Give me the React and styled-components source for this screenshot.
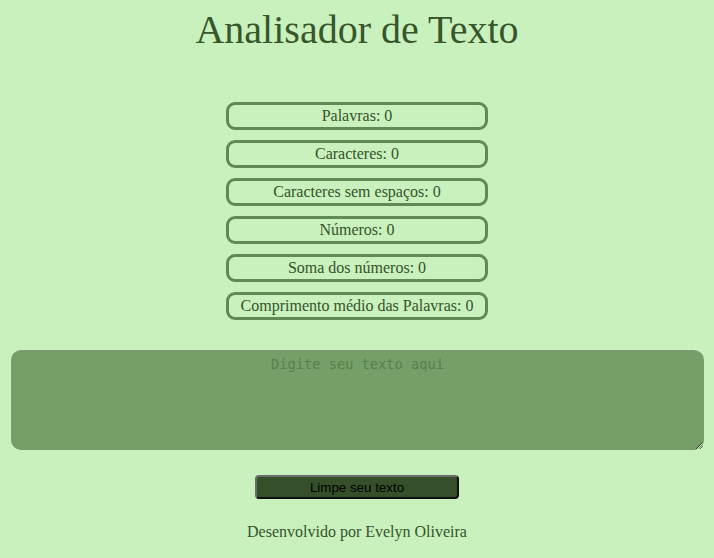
import React, { useState } from "react";
import styled, { createGlobalStyle } from "styled-components";

const Global = createGlobalStyle`
  html, body { margin: 0; padding: 0; background: #c9f1bd; }
  body { font-family: "Liberation Serif", "Times New Roman", serif; color: #35532b; }
`;

const Page = styled.main`
  display: flex;
  flex-direction: column;
  align-items: center;
  min-height: 558px;
`;

const Title = styled.h1`
  margin: 7px 0 0;
  font-size: 40px;
  font-weight: normal;
  line-height: 45px;
  color: #37562b;
`;

const Stats = styled.section`
  display: flex;
  flex-direction: column;
  gap: 10px;
  margin-top: 50px;
`;

const Stat = styled.div`
  box-sizing: border-box;
  width: 262px;
  height: 28px;
  border: 3px solid #5f8a55;
  border-radius: 9px;
  display: flex;
  align-items: center;
  justify-content: center;
  font-size: 16px;
  color: #35532b;
`;

const TextArea = styled.textarea`
  box-sizing: border-box;
  margin-top: 30px;
  width: 693px;
  height: 100px;
  align-self: flex-start;
  margin-left: 11px;
  background: #749f68;
  border: none;
  border-top: 1px solid #849982;
  border-radius: 10px;
  text-align: center;
  font-family: "DejaVu Sans Mono", monospace;
  font-size: 13.7px;
  color: #2d4a26;
  padding: 5px 4px;
  outline: none;
  &::placeholder { color: #57804d; }
`;

const ClearButton = styled.button`
  margin-top: 25px;
  width: 204px;
  height: 24px;
  box-sizing: border-box;
  background: #344f2a;
  border: 2px solid;
  border-color: #6b6b6b #111 #111 #6b6b6b;
  border-radius: 4px;
  font-family: "Liberation Sans", Arial, sans-serif;
  font-size: 13.33px;
  color: #000;
  padding: 0;
  cursor: pointer;
`;

const Footer = styled.p`
  margin: 24px 0 0;
  font-size: 16px;
  color: #35532b;
`;

export default function App() {
  const [text, setText] = useState("");
  const words = text.trim() ? text.trim().split(/\s+/) : [];
  const nums = text.match(/-?\d+(\.\d+)?/g) || [];
  const sum = nums.reduce((a, n) => a + parseFloat(n), 0);
  const avg = words.length ? words.reduce((a, w) => a + w.length, 0) / words.length : 0;
  const stats = [
    ["Palavras", words.length],
    ["Caracteres", text.length],
    ["Caracteres sem espaços", text.replace(/\s/g, "").length],
    ["Números", nums.length],
    ["Soma dos números", sum],
    ["Comprimento médio das Palavras", Math.round(avg * 100) / 100],
  ];
  return (
    <>
      <Global />
      <Page>
        <Title>Analisador de Texto</Title>
        <Stats>
          {stats.map(([label, value]) => (
            <Stat key={label}>{label}: {value}</Stat>
          ))}
        </Stats>
        <TextArea
          placeholder="Digite seu texto aqui"
          value={text}
          onChange={(e) => setText(e.target.value)}
        />
        <ClearButton onClick={() => setText("")}>Limpe seu texto</ClearButton>
        <Footer>Desenvolvido por Evelyn Oliveira</Footer>
      </Page>
    </>
  );
}
